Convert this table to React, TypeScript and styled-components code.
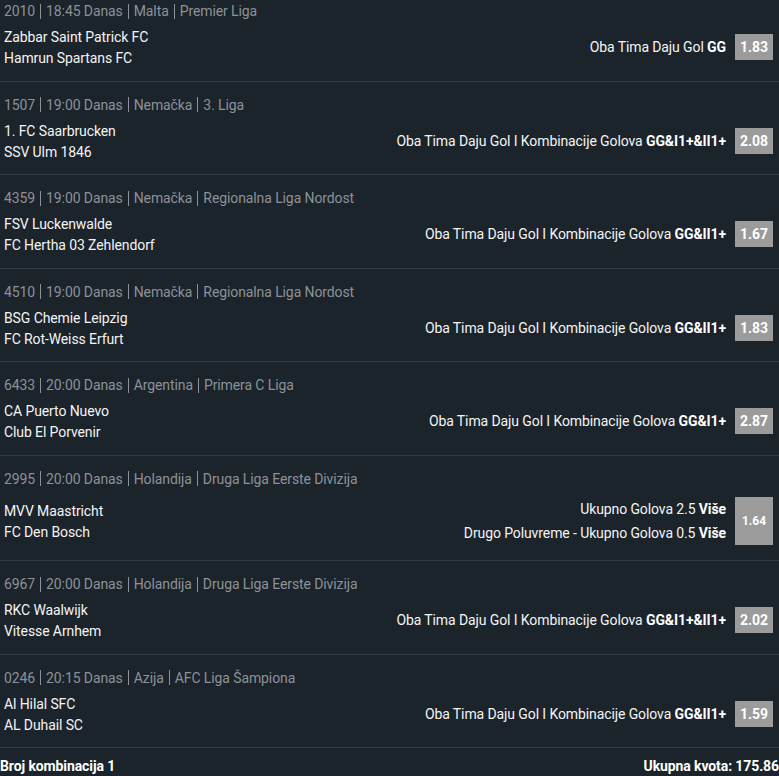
import styled, { createGlobalStyle } from 'styled-components';

const GlobalStyle = createGlobalStyle`
  html, body {
    margin: 0;
    padding: 0;
    background-color: #1b232b;
    overflow: hidden;
  }
  body {
    font-family: Roboto, "Liberation Sans", Arial, sans-serif;
    font-size: 14px;
    letter-spacing: -0.1px;
    color: #ffffff;
  }
`;

const Slip = styled.div`
  width: 779px;
  margin-top: -12px;
`;

const Row = styled.div`
  padding: 13px 6px 10.5px 4px;
  border-bottom: 1px solid #2e3d48;
`;

const Meta = styled.div`
  display: flex;
  align-items: center;
  line-height: 20px;
  color: #8c9298;
  white-space: nowrap;
`;

const Pipe = styled.span`
  display: inline-block;
  width: 1px;
  height: 15px;
  margin: 0 5px;
  background-color: #8c9298;
`;

const Body = styled.div`
  display: flex;
  align-items: center;
  justify-content: space-between;
  margin-top: 3px;
`;

const Teams = styled.div`
  display: flex;
  flex-direction: column;
  padding: 3px 0 1px;
  line-height: 21px;
  color: #f4f4f4;
`;

const Pick = styled.div`
  display: flex;
  align-items: stretch;
  gap: 9px;
  padding: 5px 0;
`;

const Selections = styled.div`
  display: flex;
  flex-direction: column;
  justify-content: center;
  align-items: flex-end;
`;

const Selection = styled.div`
  line-height: 24px;
  color: #f4f4f4;
  white-space: nowrap;

  b {
    font-weight: 700;
    color: #ffffff;
  }
`;

const Odds = styled.div<{ $multi?: boolean }>`
  display: flex;
  align-items: center;
  justify-content: center;
  width: 38px;
  min-height: 26px;
  background-color: #9b9b9b;
  color: #ffffff;
  font-weight: 700;
  letter-spacing: 0;
  font-size: ${p => (p.$multi ? '12px' : '14px')};
`;

const Footer = styled.div`
  display: flex;
  justify-content: space-between;
  padding-top: 8px;
  line-height: 20px;
  font-weight: 700;
  color: #ffffff;
`;

type Bet = {
  code: string;
  time: string;
  country: string;
  league: string;
  home: string;
  away: string;
  picks: { label: string; tip: string }[];
  odds: string;
};

const combo = 'Oba Tima Daju Gol I Kombinacije Golova';

const bets: Bet[] = [
  { code: '2010', time: '18:45 Danas', country: 'Malta', league: 'Premier Liga', home: 'Zabbar Saint Patrick FC', away: 'Hamrun Spartans FC', picks: [{ label: 'Oba Tima Daju Gol', tip: 'GG' }], odds: '1.83' },
  { code: '1507', time: '19:00 Danas', country: 'Nemačka', league: '3. Liga', home: '1. FC Saarbrucken', away: 'SSV Ulm 1846', picks: [{ label: combo, tip: 'GG&I1+&II1+' }], odds: '2.08' },
  { code: '4359', time: '19:00 Danas', country: 'Nemačka', league: 'Regionalna Liga Nordost', home: 'FSV Luckenwalde', away: 'FC Hertha 03 Zehlendorf', picks: [{ label: combo, tip: 'GG&II1+' }], odds: '1.67' },
  { code: '4510', time: '19:00 Danas', country: 'Nemačka', league: 'Regionalna Liga Nordost', home: 'BSG Chemie Leipzig', away: 'FC Rot-Weiss Erfurt', picks: [{ label: combo, tip: 'GG&II1+' }], odds: '1.83' },
  { code: '6433', time: '20:00 Danas', country: 'Argentina', league: 'Primera C Liga', home: 'CA Puerto Nuevo', away: 'Club El Porvenir', picks: [{ label: combo, tip: 'GG&I1+' }], odds: '2.87' },
  { code: '2995', time: '20:00 Danas', country: 'Holandija', league: 'Druga Liga Eerste Divizija', home: 'MVV Maastricht', away: 'FC Den Bosch', picks: [{ label: 'Ukupno Golova 2.5', tip: 'Više' }, { label: 'Drugo Poluvreme - Ukupno Golova 0.5', tip: 'Više' }], odds: '1.64' },
  { code: '6967', time: '20:00 Danas', country: 'Holandija', league: 'Druga Liga Eerste Divizija', home: 'RKC Waalwijk', away: 'Vitesse Arnhem', picks: [{ label: combo, tip: 'GG&I1+&II1+' }], odds: '2.02' },
  { code: '0246', time: '20:15 Danas', country: 'Azija', league: 'AFC Liga Šampiona', home: 'Al Hilal SFC', away: 'AL Duhail SC', picks: [{ label: combo, tip: 'GG&II1+' }], odds: '1.59' },
];

export default function App() {
  return (
    <>
      <GlobalStyle />
      <Slip>
        {bets.map(bet => (
          <Row key={bet.code}>
            <Meta>
              {bet.code}
              <Pipe />
              {bet.time}
              <Pipe />
              {bet.country}
              <Pipe />
              {bet.league}
            </Meta>
            <Body>
              <Teams>
                <span>{bet.home}</span>
                <span>{bet.away}</span>
              </Teams>
              <Pick>
                <Selections>
                  {bet.picks.map(p => (
                    <Selection key={p.label}>
                      {p.label} <b>{p.tip}</b>
                    </Selection>
                  ))}
                </Selections>
                <Odds $multi={bet.picks.length > 1}>{bet.odds}</Odds>
              </Pick>
            </Body>
          </Row>
        ))}
        <Footer>
          <span>Broj kombinacija 1</span>
          <span>Ukupna kvota: 175.86</span>
        </Footer>
      </Slip>
    </>
  );
}
